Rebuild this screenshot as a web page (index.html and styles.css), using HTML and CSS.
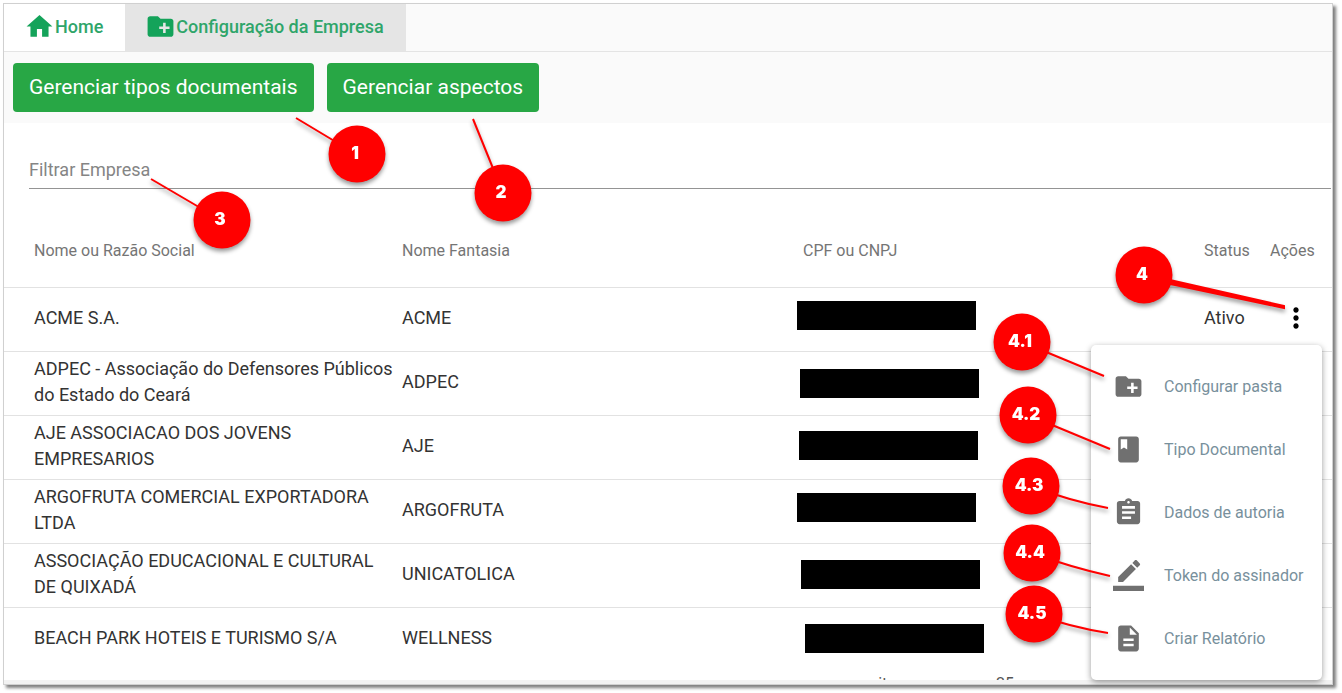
FILE: index.html
```html
<!DOCTYPE html>
<html lang="pt-BR">
  <head>
    <meta charset="UTF-8">
    <title>Configuração da Empresa</title>
    <link rel="stylesheet" href="styles.css">
  </head>
  <body>
    <div class="window">
      <nav class="tabs">
        <a class="tab" href="#home">
          <svg class="icon" viewBox="0 0 24 24"><path d="M10 20v-6h4v6h5v-8h3L12 3 2 12h3v8z"/></svg>
          <span>Home</span>
        </a>
        <a class="tab active" href="#empresa">
          <svg class="icon" viewBox="0 0 24 24"><path d="M20 6h-8l-2-2H4c-1.110 0-1.990.890-1.990 2L2 18c0 1.110.890 2 2 2h16c1.110 0 2-.890 2-2V8c0-1.110-.890-2-2-2zm-1 8h-3v3h-2v-3h-3v-2h3V9h2v3h3v2z"/></svg>
          <span>Configuração da Empresa</span>
        </a>
      </nav>

      <div class="toolbar">
        <button type="button" class="btn">Gerenciar tipos documentais</button>
        <button type="button" class="btn">Gerenciar aspectos</button>
      </div>

      <div class="filter">
        <input type="text" id="filtro" placeholder="Filtrar Empresa" aria-label="Filtrar Empresa">
      </div>

      <table class="companies">
        <thead>
          <tr>
            <th class="col-name">Nome ou Razão Social</th>
            <th class="col-fantasy">Nome Fantasia</th>
            <th>CPF ou CNPJ</th>
            <th class="col-status">Status</th>
            <th class="col-actions">Ações</th>
          </tr>
        </thead>
        <tbody>
          <tr>
            <td>ACME S.A.</td>
            <td>ACME</td>
            <td></td>
            <td>Ativo</td>
            <td>
              <button type="button" class="more" aria-label="Ações">
                <svg viewBox="0 0 24 24"><path d="M12 8c1.100 0 2-.9 2-2s-.9-2-2-2-2 .9-2 2 .9 2 2 2zm0 2c-1.100 0-2 .9-2 2s.9 2 2 2 2-.9 2-2-.9-2-2-2zm0 6c-1.100 0-2 .9-2 2s.9 2 2 2 2-.9 2-2-.9-2-2-2z"/></svg>
              </button>
            </td>
          </tr>
          <tr>
            <td>ADPEC - Associação do Defensores Públicos do Estado do Ceará</td>
            <td>ADPEC</td>
            <td></td>
            <td></td>
            <td></td>
          </tr>
          <tr>
            <td>AJE ASSOCIACAO DOS JOVENS EMPRESARIOS</td>
            <td>AJE</td>
            <td></td>
            <td></td>
            <td></td>
          </tr>
          <tr>
            <td>ARGOFRUTA COMERCIAL EXPORTADORA LTDA</td>
            <td>ARGOFRUTA</td>
            <td></td>
            <td></td>
            <td></td>
          </tr>
          <tr>
            <td>ASSOCIAÇÃO EDUCACIONAL E CULTURAL DE QUIXADÁ</td>
            <td>UNICATOLICA</td>
            <td></td>
            <td></td>
            <td></td>
          </tr>
          <tr>
            <td>BEACH PARK HOTEIS E TURISMO S/A</td>
            <td>WELLNESS</td>
            <td></td>
            <td></td>
            <td></td>
          </tr>
        </tbody>
      </table>
      <div class="paginator">
        <span>items per page</span>
        <span>25</span>
      </div>

      <div class="menu" role="menu">
        <button type="button" role="menuitem">
          <svg class="icon" viewBox="0 0 24 24"><path d="M20 6h-8l-2-2H4c-1.110 0-1.990.890-1.990 2L2 18c0 1.110.890 2 2 2h16c1.110 0 2-.890 2-2V8c0-1.110-.890-2-2-2zm-1 8h-3v3h-2v-3h-3v-2h3V9h2v3h3v2z"/></svg>
          Configurar pasta
        </button>
        <button type="button" role="menuitem">
          <svg class="icon" viewBox="0 0 24 24"><path d="M18 2H6c-1.100 0-2 .9-2 2v16c0 1.100.9 2 2 2h12c1.100 0 2-.9 2-2V4c0-1.100-.9-2-2-2zM6 4h5v8l-2.500-1.500L6 12V4z"/></svg>
          Tipo Documental
        </button>
        <button type="button" role="menuitem">
          <svg class="icon" viewBox="0 0 24 24"><path d="M19 3h-4.180C14.400 1.840 13.300 1 12 1c-1.300 0-2.400.840-2.820 2H5c-1.100 0-2 .9-2 2v14c0 1.100.9 2 2 2h14c1.100 0 2-.9 2-2V5c0-1.100-.9-2-2-2zm-7 0c.550 0 1 .450 1 1s-.450 1-1 1-1-.450-1-1 .450-1 1-1zm2 14H7v-2h7v2zm3-4H7v-2h10v2zm0-4H7V7h10v2z"/></svg>
          Dados de autoria
        </button>
        <button type="button" role="menuitem">
          <svg class="icon" viewBox="0 0 24 24"><path d="M17.750 7L14 3.250l-10 10V17h3.750l10-10zm2.960-2.960c.390-.390.390-1.020 0-1.410L18.370.290c-.390-.390-1.020-.390-1.410 0L15 2.250 18.750 6l1.960-1.960zM0 20h24v4H0z"/></svg>
          Token do assinador
        </button>
        <button type="button" role="menuitem">
          <svg class="icon" viewBox="0 0 24 24"><path d="M14 2H6c-1.100 0-1.990.9-1.990 2L4 20c0 1.100.890 2 1.990 2H18c1.100 0 2-.9 2-2V8l-6-6zm2 16H8v-2h8v2zm0-4H8v-2h8v2zm-3-5V3.500L18.500 9H13z"/></svg>
          Criar Relatório
        </button>
      </div>
    </div>

    <!-- numbered callouts and the bars that hide the CNPJ -->
    <svg class="notes">
      <g class="redacted">
        <rect x="797" y="301" width="179" height="29"/>
        <rect x="800" y="369" width="179" height="29"/>
        <rect x="799" y="431" width="179" height="29"/>
        <rect x="797" y="493" width="179" height="29"/>
        <rect x="801" y="560" width="179" height="29"/>
        <rect x="805" y="624" width="179" height="29"/>
      </g>
      <g class="callout">
        <path d="M296 118L356 154"/><circle cx="357" cy="154" r="28.500"/><text x="355" y="159">1</text>
      </g>
      <g class="callout">
        <path d="M473 119L503 193"/><circle cx="503" cy="193" r="28.500"/><text x="501" y="198">2</text>
      </g>
      <g class="callout">
        <path d="M151 179L221 220"/><circle cx="222" cy="220" r="28.500"/><text x="220" y="225">3</text>
      </g>
      <g class="callout">
        <path class="wedge" d="M1284 306L1170 280L1170 284L1284 308z"/><circle cx="1144" cy="275" r="28.500"/><text x="1142" y="280">4</text>
      </g>
      <g class="callout">
        <path d="M1104 376L1022 342"/><circle cx="1022" cy="342" r="28.500"/><text x="1020" y="347">4.1</text>
      </g>
      <g class="callout">
        <path d="M1110 449L1028 415"/><circle cx="1028" cy="415" r="28.500"/><text x="1026" y="420">4.2</text>
      </g>
      <g class="callout">
        <path d="M1108 508Q1070 501 1031 486"/><circle cx="1031" cy="486" r="28.500"/><text x="1029" y="491">4.3</text>
      </g>
      <g class="callout">
        <path d="M1110 576Q1070 567 1032 553"/><circle cx="1032" cy="553" r="28.500"/><text x="1030" y="558">4.4</text>
      </g>
      <g class="callout">
        <path d="M1108 633Q1070 627 1034 614"/><circle cx="1034" cy="614" r="28.500"/><text x="1032" y="619">4.5</text>
      </g>
    </svg>
  </body>
</html>
```
FILE: styles.css
```css
* {
  box-sizing: border-box;
}

body {
  background-color: #fff;
  font-family: Roboto, Arial, sans-serif;
  margin: 0;
  padding: 3px 9px 9px 3px;
  position: relative;
}

.window {
  background-color: #fff;
  border: 1px solid #d0d0d0;
  box-shadow: 3px 3px 3px rgba(0, 0, 0, 0.5);
  position: relative;
}

.tabs {
  background-color: #fafafa;
  border-bottom: 1px solid #e4e4e4;
  display: flex;
}

.tab {
  align-items: center;
  background-color: #fff;
  color: #2fa56a;
  display: flex;
  font-size: 18px;
  font-weight: 500;
  height: 47px;
  line-height: 20px;
  padding: 0 22px 2px 20px;
  text-decoration: none;
}

.tab.active {
  background-color: #e5e5e5;
}

.icon {
  fill: #707070;
  flex: none;
  height: 31px;
  width: 31px;
}

.tab .icon {
  fill: #14a35a;
}

.toolbar {
  background-color: #fafafa;
  display: flex;
  gap: 13px;
  padding: 11px 9px;
}

.btn {
  background-color: #28a745;
  border: none;
  border-radius: 4px;
  color: #fff;
  cursor: pointer;
  font-family: inherit;
  font-size: 21px;
  height: 49px;
  padding: 0 16px 2px;
}

.filter {
  padding: 30px 1px 0 25px;
}

.filter input {
  background: none;
  border: none;
  border-bottom: 1px solid #949494;
  color: #333;
  display: block;
  font-family: inherit;
  font-size: 18px;
  height: 36px;
  padding: 0 0 2px;
  width: 100%;
}

.filter input::placeholder {
  color: #858585;
}

.companies {
  border-collapse: collapse;
  margin-top: 25px;
  table-layout: fixed;
  width: 100%;
}

.companies th {
  color: #757575;
  font-size: 16px;
  font-weight: 400;
  height: 73px;
  padding: 0;
  text-align: left;
}

.companies td {
  color: #333;
  font-size: 18px;
  height: 64px;
  line-height: 26px;
  padding: 0 4px 2px 0;
}

.companies tr {
  border-bottom: 1px solid #e2e2e2;
}

.companies tbody tr:last-child {
  border-bottom: none;
}

.companies th:first-child,
.companies td:first-child {
  padding-left: 30px;
}

.col-name {
  width: 398px;
}

.col-fantasy {
  width: 401px;
}

.col-status {
  width: 66px;
}

.col-actions {
  width: 62px;
}

.more {
  background: none;
  border: none;
  cursor: pointer;
  display: block;
  height: 32px;
  margin-left: 10px;
  padding: 0;
  width: 32px;
}

.more svg {
  display: block;
}

/* only the top of the paginator fits in the window */
.paginator {
  border-bottom: 4px solid #f2f2f2;
  color: #555;
  display: flex;
  font-size: 16px;
  gap: 12px;
  height: 13px;
  justify-content: flex-end;
  line-height: 20px;
  overflow: hidden;
  padding: 3px 318px 0 0;
}

.menu {
  background-color: #fff;
  border-radius: 5px;
  box-shadow: 0 2px 6px rgba(0, 0, 0, 0.4);
  padding: 10px 0;
  position: absolute;
  right: 10px;
  top: 341px;
  width: 231px;
}

.menu button {
  align-items: center;
  background: none;
  border: none;
  color: #78909c;
  cursor: pointer;
  display: flex;
  font-family: inherit;
  font-size: 16px;
  gap: 20px;
  height: 63px;
  padding: 0 0 0 22px;
  white-space: nowrap;
  width: 100%;
}

.notes {
  height: 100%;
  left: 0;
  pointer-events: none;
  position: absolute;
  top: 0;
  width: 100%;
}

.callout {
  filter: drop-shadow(0 3px 2px rgba(0, 0, 0, 0.4));
}

.callout path {
  fill: none;
  stroke: #f00;
  stroke-width: 2px;
}

.callout circle,
.callout .wedge {
  fill: #f00;
}

.callout text {
  fill: #fff;
  font-family: Inter, "Arial Black", sans-serif;
  font-size: 17px;
  font-weight: 900;
  text-anchor: middle;
}
```
